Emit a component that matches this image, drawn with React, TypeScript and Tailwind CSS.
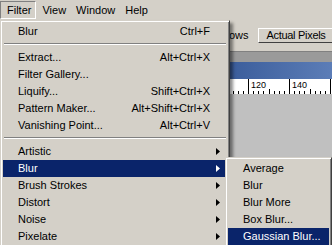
import type { ReactNode } from "react";

type Item =
  | { sep: true }
  | { label: string; shortcut?: string; sub?: boolean; active?: boolean };

const filterMenu: Item[] = [
  { label: "Blur", shortcut: "Ctrl+F" },
  { sep: true },
  { label: "Extract...", shortcut: "Alt+Ctrl+X" },
  { label: "Filter Gallery..." },
  { label: "Liquify...", shortcut: "Shift+Ctrl+X" },
  { label: "Pattern Maker...", shortcut: "Alt+Shift+Ctrl+X" },
  { label: "Vanishing Point...", shortcut: "Alt+Ctrl+V" },
  { sep: true },
  { label: "Artistic", sub: true },
  { label: "Blur", sub: true, active: true },
  { label: "Brush Strokes", sub: true },
  { label: "Distort", sub: true },
  { label: "Noise", sub: true },
  { label: "Pixelate", sub: true },
];

const blurMenu: Item[] = [
  { label: "Average" },
  { label: "Blur" },
  { label: "Blur More" },
  { label: "Box Blur..." },
  { label: "Gaussian Blur...", active: true },
];

function Arrow({ white }: { white?: boolean }) {
  return (
    <svg width="4" height="7" viewBox="0 0 4 7" className="ml-[6px]">
      <polygon points="0,0 4,3.5 0,7" fill={white ? "#ffffff" : "#000000"} />
    </svg>
  );
}

function MenuBox({ items }: { items: Item[] }) {
  return (
    <div className="border border-t-[#d4d0c8] border-l-[#d4d0c8] border-r-[#404040] border-b-[#404040] bg-[#d4d0c8] shadow-[inset_1px_1px_#ffffff,inset_-1px_-1px_#808080,3px_3px_3px_rgba(0,0,0,0.45)] p-[2px]">
      {items.map((it, i) =>
        "sep" in it ? (
          <div key={i} className="h-[9px] px-[1px] pt-[3px]">
            <div className="h-px bg-[#808080]" />
            <div className="h-px bg-white" />
          </div>
        ) : (
          <div
            key={i}
            className={`flex h-[17px] items-center pl-[15px] ${
              it.active ? "bg-[#0a246a] text-white" : "text-black"
            }`}
          >
            <span className="flex-1 whitespace-nowrap">{it.label}</span>
            {it.shortcut && <span className="whitespace-nowrap">{it.shortcut}</span>}
            <span className="flex w-[17px] items-center">
              {it.sub && <Arrow white={it.active} />}
            </span>
          </div>
        )
      )}
    </div>
  );
}

function MenuTitle({ children, open }: { children: ReactNode; open?: boolean }) {
  return (
    <div
      className={`flex h-[18px] items-center ${
        open
          ? "border border-t-[#808080] border-l-[#808080] border-r-white border-b-white pl-[6px] pr-[4px]"
          : "border border-transparent px-[4px]"
      }`}
    >
      {children}
    </div>
  );
}

function Ruler() {
  const ticks = [];
  for (let i = 0; i < 21; i++) {
    const x = 19 - 20.5 + i * 5.125;
    const major = i % 8 === 4;
    const mid = i % 4 === 0;
    ticks.push(
      <line
        key={i}
        x1={Math.round(x) + 0.5}
        x2={Math.round(x) + 0.5}
        y1={major ? 0 : mid ? 10 : 12}
        y2={15}
        stroke="#000"
        strokeWidth="1"
      />
    );
  }
  return (
    <svg width="103" height="15" className="block">
      <rect width="103" height="15" fill="#ffffff" />
      {ticks}
      <text x="22" y="9" fontSize="9" fontFamily="Liberation Sans, Arial, sans-serif" fill="#000">
        120
      </text>
      <text x="63" y="9" fontSize="9" fontFamily="Liberation Sans, Arial, sans-serif" fill="#000">
        140
      </text>
    </svg>
  );
}

export default function App() {
  return (
    <div className="relative h-[245px] w-[332px] overflow-hidden bg-[#d4d0c8] font-['Liberation_Sans',Arial,sans-serif] text-[11px] text-black">
      {/* menu bar */}
      <div className="flex h-[20px] items-start pt-px">
        <MenuTitle open>Filter</MenuTitle>
        <div className="w-px" />
        <MenuTitle>View</MenuTitle>
        <MenuTitle>Window</MenuTitle>
        <MenuTitle>Help</MenuTitle>
      </div>

      {/* options bar */}
      <div className="flex h-[32px] items-center border-b border-[#808080] pl-[158px]">
        <span className="whitespace-nowrap">Zoom All Windows</span>
        <div className="ml-[10px] flex h-[15px] items-center whitespace-nowrap border border-t-white border-l-white border-r-[#404040] border-b-[#404040] pl-[7px] pr-[8px] tracking-[-0.3px]">
          Actual Pixels
        </div>
      </div>

      {/* workspace with document window */}
      <div className="h-[200px] bg-[#9a9a9a] pt-[10px]">
        <div className="ml-[229px]">
          <div className="h-[17px] bg-gradient-to-r from-[#3b5d9b] to-[#5c7db7]" />
          <Ruler />
          <div className="h-[160px] bg-[#c0c0c0]" />
        </div>
      </div>

      {/* open Filter menu */}
      <div className="absolute left-0 top-[20px] w-[230px]">
        <MenuBox items={filterMenu} />
      </div>

      {/* Blur submenu */}
      <div className="absolute left-[225px] top-[157px] w-[107px]">
        <MenuBox items={blurMenu} />
      </div>
    </div>
  );
}
